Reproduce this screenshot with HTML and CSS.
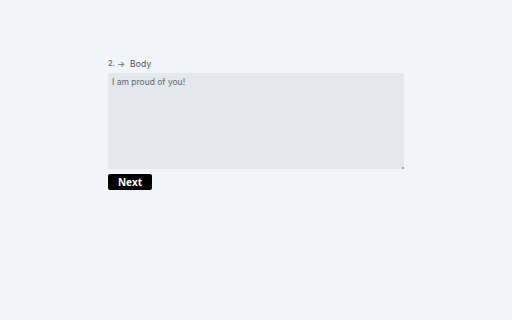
FILE: index.html
```html
<!DOCTYPE html>
<html>
<head>
<meta charset="utf-8">
<link rel="stylesheet" href="styles.css">
</head>
<body>
<main class="page">
  <form class="form">
    <label class="label" for="body">
      <span class="num">2.</span>
      <span class="arrow">&rarr;</span>
      <span class="name">Body</span>
    </label>
    <div class="field-wrap">
      <textarea id="body" class="field">I am proud of you!</textarea>
      <span class="grip"></span>
    </div>
    <button type="button" class="next">Next</button>
  </form>
</main>
</body>
</html>
```

FILE: styles.css
```css
html, body {
  margin: 0;
  padding: 0;
  background: #f1f4f9;
  font-family: "Inter", "Open Sans", sans-serif;
}
.page {
  width: 512px;
  height: 320px;
  padding: 57px 0 0 108px;
  box-sizing: border-box;
}
.form {
  display: flex;
  flex-direction: column;
  align-items: flex-start;
  width: 296px;
}
.label {
  display: flex;
  align-items: center;
  height: 13px;
  color: #5f646b;
  font-size: 7.5px;
  margin-bottom: 3px;
}
.num { font-weight: 500; }
.arrow { margin-left: 2px; font-size: 8.5px; }
.name { margin-left: 5px; font-size: 8.5px; font-weight: 400; color: #4f545b; letter-spacing: 0.2px; }
.field-wrap {
  position: relative;
  width: 296px;
  height: 96px;
}
.field {
  display: block;
  box-sizing: border-box;
  width: 296px;
  height: 96px;
  margin: 0;
  padding: 3px 4px;
  border: none;
  border-radius: 1px;
  background: #e4e7eb;
  color: #62676e;
  font-family: "Inter", "Open Sans", sans-serif;
  font-size: 8.5px;
  font-weight: 400;
  line-height: 12px;
  letter-spacing: 0;
  resize: none;
  outline: none;
}
.grip {
  position: absolute;
  right: 0;
  bottom: 0;
  width: 2px;
  height: 2px;
  background: #9aa0a6;
}
.next {
  margin-top: 5px;
  width: 44px;
  height: 16px;
  padding: 0;
  border: none;
  border-radius: 2px;
  background: #000;
  color: #fff;
  font-family: "Open Sans", "Liberation Sans", sans-serif;
  font-size: 10px;
  font-weight: 700;
  line-height: 16px;
}
```
